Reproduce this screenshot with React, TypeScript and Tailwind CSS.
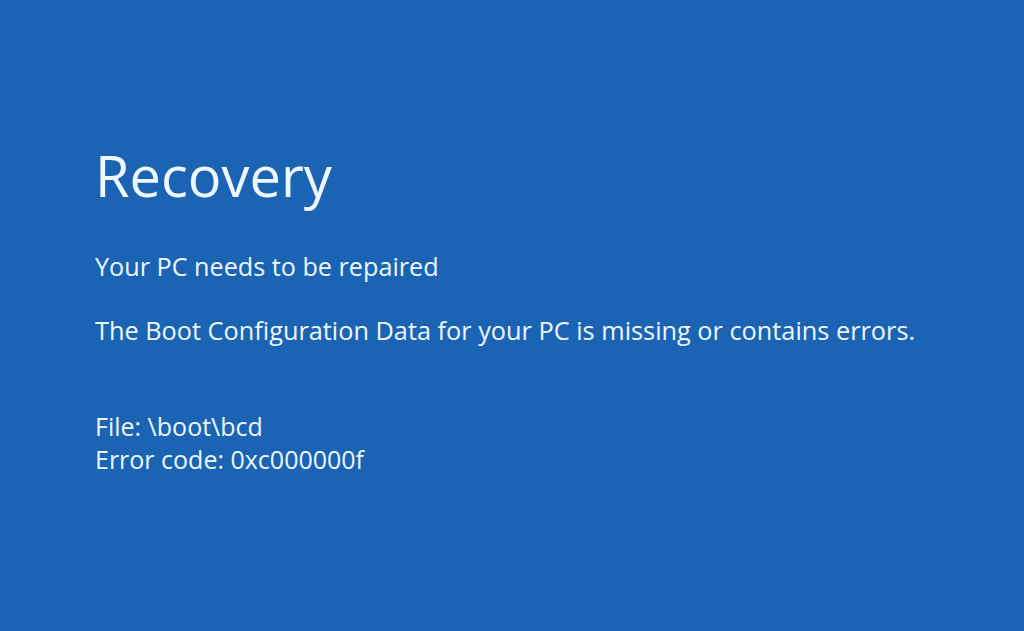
export default function App() {
  return (
    <div className="w-[1024px] h-[631px] bg-[#1b64b3] text-[#eef6ff] overflow-hidden" style={{ fontFamily: '"Open Sans", "Noto Sans", sans-serif' }}>
      <div className="pl-[95px] pt-[139px] flex flex-col">
        <h1 className="text-[56px] leading-[72px] font-normal">Recovery</h1>
        <p className="mt-[38px] text-[25.2px] leading-[34px]">Your PC needs to be repaired</p>
        <p className="mt-[30px] text-[25.3px] leading-[34px]">
          The Boot Configuration Data for your PC is missing or contains errors.
        </p>
        <div className="mt-[63px] text-[25px] leading-[33px]">
          <p>File: \boot\bcd</p>
          <p>Error code: 0xc000000f</p>
        </div>
      </div>
    </div>
  )
}
